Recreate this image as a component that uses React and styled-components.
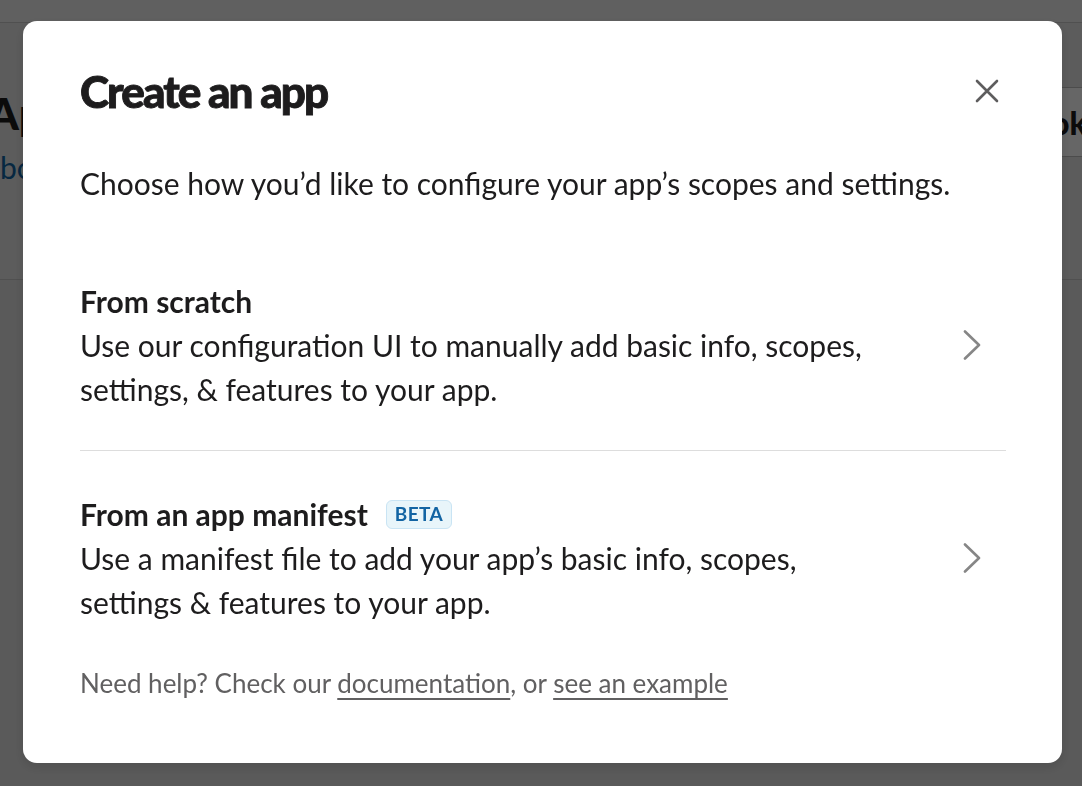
import React from "react";
import styled, { createGlobalStyle } from "styled-components";

const GlobalStyle = createGlobalStyle`
  * { box-sizing: border-box; }
  html, body {
    margin: 0;
    padding: 0;
    width: 1082px;
    height: 786px;
    overflow: hidden;
    font-family: "Lato", "Liberation Sans", sans-serif;
    background: #fff;
  }
`;

const Page = styled.div`
  width: 1082px;
  height: 786px;
  background: #e0e0e0;
  overflow: hidden;
`;

const TopStrip = styled.div`
  height: 22px;
  background: #f0f0f0;
`;

const Header = styled.header`
  height: 258px;
  background: #e6e6e6;
  border-top: 1px solid #c8c8c8;
  border-bottom: 1px solid #c8c8c8;
  display: flex;
  justify-content: space-between;
  align-items: flex-start;
  padding-top: 64px;
`;

const HeaderText = styled.div`
  display: flex;
  flex-direction: column;
  margin-left: -12px;
`;

const PageTitle = styled.h1`
  margin: 0;
  font-size: 44px;
  line-height: 52px;
  font-weight: 900;
  color: #1d1c1d;
`;

const PageLink = styled.a`
  font-size: 30px;
  line-height: 44px;
  color: #1264a3;
  margin-top: 6px;
  margin-left: 12px;
`;

const HeaderButton = styled.button`
  margin-right: -30px;
  height: 70px;
  padding: 0 24px;
  border: 1px solid #bdbdbd;
  border-radius: 8px;
  background: #fff;
  font-family: "Lato", "Liberation Sans", sans-serif;
  font-size: 32px;
  font-weight: 900;
  color: #1d1c1d;
`;

const Overlay = styled.div`
  position: fixed;
  inset: 0;
  background: rgba(0, 0, 0, 0.6);
  display: flex;
  align-items: flex-start;
  padding: 21px 0 0 23px;
`;

const Modal = styled.div`
  width: 1039px;
  background: #fff;
  border-radius: 14px;
  box-shadow: 0 4px 12px rgba(0, 0, 0, 0.12);
  padding: 44px 56px 60px 57px;
  color: #1d1c1d;
`;

const ModalHead = styled.div`
  display: flex;
  justify-content: space-between;
  align-items: center;
`;

const Title = styled.h2`
  margin: 0;
  font-size: 44px;
  line-height: 52px;
  font-weight: 900;
  letter-spacing: -1.9px;
  -webkit-text-stroke: 0.9px #1d1c1d;
`;

const CloseButton = styled.button`
  width: 30px;
  height: 30px;
  margin-right: 4px;
  padding: 0;
  border: none;
  background: none;
  display: grid;
  place-items: center;
  color: #5e5d5e;
`;

const Intro = styled.p`
  margin: 44px 0 0;
  font-size: 30px;
  line-height: 44px;
`;

const OptionList = styled.div`
  margin-top: 33px;
  display: flex;
  flex-direction: column;
`;

const Option = styled.div`
  display: flex;
  align-items: center;
  justify-content: space-between;
  padding: 41px 0 39px;
  border-bottom: ${(p) => (p.$last ? "none" : "1px solid #dddddd")};
`;

const OptionText = styled.div`
  display: flex;
  flex-direction: column;
`;

const OptionTitle = styled.div`
  display: flex;
  align-items: center;
  gap: 18px;
  font-size: 30px;
  line-height: 44px;
  font-weight: 700;
`;

const OptionDesc = styled.div`
  font-size: 30px;
  line-height: 44px;
  max-width: 800px;
`;

const Badge = styled.span`
  display: inline-flex;
  align-items: center;
  height: 29px;
  padding: 0 8px;
  border: 1px solid #c9e4f4;
  border-radius: 6px;
  background: #e8f5fa;
  color: #1264a3;
  font-size: 19px;
  font-weight: 700;
  letter-spacing: 0.4px;
`;

const Chevron = styled.svg`
  flex-shrink: 0;
  margin-right: 25px;
`;

const Footer = styled.p`
  margin: 0;
  font-size: 26px;
  line-height: 40px;
  color: #616061;

  a {
    color: #616061;
    text-decoration: underline;
    text-underline-offset: 5px;
    text-decoration-thickness: 2px;
  }
`;

const ChevronIcon = () => (
  <Chevron width="18" height="30" viewBox="0 0 18 30">
    <polyline
      points="2,1.5 16,15 2,28.5"
      fill="none"
      stroke="#868686"
      strokeWidth="2.6"
      strokeLinecap="round"
      strokeLinejoin="round"
    />
  </Chevron>
);

export default function App() {
  return (
    <>
      <GlobalStyle />
      <Page>
        <TopStrip />
        <Header>
          <HeaderText>
            <PageTitle>Apps</PageTitle>
            <PageLink>bots and workflows</PageLink>
          </HeaderText>
          <HeaderButton>Book</HeaderButton>
        </Header>
      </Page>
      <Overlay>
        <Modal>
          <ModalHead>
            <Title>Create an app</Title>
            <CloseButton aria-label="Close">
              <svg width="24" height="24" viewBox="0 0 24 24">
                <path
                  d="M2 2 L22 22 M22 2 L2 22"
                  stroke="currentColor"
                  strokeWidth="2.6"
                  strokeLinecap="round"
                />
              </svg>
            </CloseButton>
          </ModalHead>
          <Intro>
            Choose how you’d like to configure your app’s scopes and settings.
          </Intro>
          <OptionList>
            <Option>
              <OptionText>
                <OptionTitle>From scratch</OptionTitle>
                <OptionDesc>
                  Use our configuration UI to manually add basic info, scopes,
                  settings, &amp; features to your app.
                </OptionDesc>
              </OptionText>
              <ChevronIcon />
            </Option>
            <Option $last>
              <OptionText>
                <OptionTitle>
                  From an app manifest <Badge>BETA</Badge>
                </OptionTitle>
                <OptionDesc>
                  Use a manifest file to add your app’s basic info, scopes,
                  settings &amp; features to your app.
                </OptionDesc>
              </OptionText>
              <ChevronIcon />
            </Option>
          </OptionList>
          <Footer>
            Need help? Check our <a>documentation</a>, or <a>see an example</a>
          </Footer>
        </Modal>
      </Overlay>
    </>
  );
}
